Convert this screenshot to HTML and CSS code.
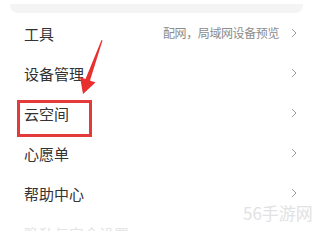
FILE: index.html
```html
<!DOCTYPE html>
<html lang="zh">
<head>
<meta charset="utf-8">
<link rel="stylesheet" href="styles.css">
</head>
<body>
<div class="page">
  <div class="strip"></div>
  <ul class="menu">
    <li class="row"><span class="label">工具</span><span class="extra">配网，局域网设备预览</span><svg class="chev" viewBox="0 0 6 10"><polyline points="1,1 5,5 1,9"/></svg></li>
    <li class="row"><span class="label">设备管理</span><svg class="chev" viewBox="0 0 6 10"><polyline points="1,1 5,5 1,9"/></svg></li>
    <li class="row"><span class="label">云空间</span><svg class="chev" viewBox="0 0 6 10"><polyline points="1,1 5,5 1,9"/></svg></li>
    <li class="row"><span class="label">心愿单</span><svg class="chev" viewBox="0 0 6 10"><polyline points="1,1 5,5 1,9"/></svg></li>
    <li class="row"><span class="label">帮助中心</span><svg class="chev" viewBox="0 0 6 10"><polyline points="1,1 5,5 1,9"/></svg></li>
    <li class="row faded"><span class="label">隐私与安全设置</span></li>
  </ul>
  <div class="highlight"></div>
  <svg class="arrow" viewBox="0 0 313 231" width="313" height="231">
    <polygon points="101.5,40 102.5,40.5 90,80.5 95.5,82.5 83,94 80,77 85.5,79" fill="#e8302f"/>
  </svg>
  <div class="watermark">56手游网</div>
</div>
</body>
</html>
```
FILE: styles.css
```css
html, body {
  margin: 0;
  padding: 0;
  background: #ffffff;
}
.page {
  position: relative;
  width: 313px;
  height: 231px;
  overflow: hidden;
  font-family: "Noto Sans CJK SC", "Noto Sans", sans-serif;
}
.strip {
  margin: 4px 10px 0;
  height: 9px;
  background: #f4f4f4;
  border-radius: 0 0 8px 8px;
}
.menu {
  list-style: none;
  margin: 0;
  padding: 0;
}
.row {
  display: flex;
  align-items: center;
  height: 40px;
  padding: 0 16px 0 24px;
}
.label {
  font-size: 15px;
  color: #333333;
  flex: 1;
  line-height: 1;
}
.extra {
  font-size: 12px;
  letter-spacing: -0.4px;
  color: #8c8c8c;
  margin-right: 12px;
  line-height: 1;
}
.chev {
  width: 6px;
  height: 10px;
  fill: none;
  stroke: #9a9a9a;
  stroke-width: 1;
}
.faded .label {
  color: #e4e4e4;
}
.highlight {
  position: absolute;
  left: 17px;
  top: 100px;
  width: 69px;
  height: 31px;
  border: 3px solid #e53a3a;
}
.arrow {
  position: absolute;
  left: 0;
  top: 0;
}
.watermark {
  position: absolute;
  left: 243px;
  top: 203px;
  font-size: 17px;
  line-height: 20px;
  color: #e2e2e2;
}
```
